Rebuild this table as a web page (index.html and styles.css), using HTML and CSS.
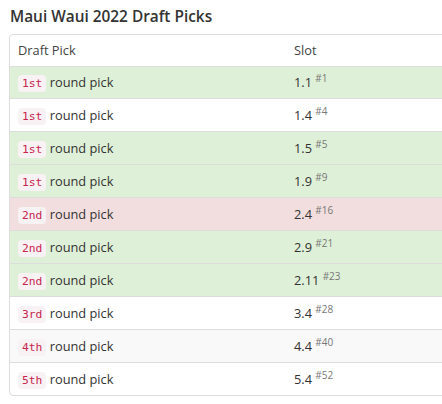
FILE: index.html
```html
<!DOCTYPE html>
<html lang="en">
<head>
<meta charset="utf-8">
<title>Maui Waui 2022 Draft Picks</title>
<link rel="stylesheet" href="styles.css">
</head>
<body>
<h4 class="title">Maui Waui 2022 Draft Picks</h4>
<div class="panel">
  <table class="picks">
    <thead>
      <tr><th class="col-pick">Draft Pick</th><th>Slot</th></tr>
    </thead>
    <tbody>
      <tr class="success"><td><code>1st</code> round pick</td><td>1.1 <sup class="overall">#1</sup></td></tr>
      <tr><td><code>1st</code> round pick</td><td>1.4 <sup class="overall">#4</sup></td></tr>
      <tr class="success"><td><code>1st</code> round pick</td><td>1.5 <sup class="overall">#5</sup></td></tr>
      <tr class="success"><td><code>1st</code> round pick</td><td>1.9 <sup class="overall">#9</sup></td></tr>
      <tr class="danger"><td><code>2nd</code> round pick</td><td>2.4 <sup class="overall">#16</sup></td></tr>
      <tr class="success"><td><code>2nd</code> round pick</td><td>2.9 <sup class="overall">#21</sup></td></tr>
      <tr class="success"><td><code>2nd</code> round pick</td><td>2.11 <sup class="overall">#23</sup></td></tr>
      <tr><td><code>3rd</code> round pick</td><td>3.4 <sup class="overall">#28</sup></td></tr>
      <tr class="striped"><td><code>4th</code> round pick</td><td>4.4 <sup class="overall">#40</sup></td></tr>
      <tr><td><code>5th</code> round pick</td><td>5.4 <sup class="overall">#52</sup></td></tr>
    </tbody>
  </table>
</div>
</body>
</html>
```
FILE: styles.css
```css
html {
  overflow: hidden;
}
body {
  margin: 0;
  padding: 0 0 0 9px;
  font-family: "Open Sans", "Noto Sans", sans-serif;
  font-size: 12.8px;
  color: #333;
  background: #fff;
}
.title {
  margin: 0;
  padding: 6px 0 0 1px;
  height: 28px;
  font-size: 15.4px;
  font-weight: 600;
  line-height: 22px;
  color: #333;
}
.panel {
  width: 580px;
  border: 1px solid #ddd;
  border-radius: 4px;
  overflow: hidden;
}
.picks {
  width: 100%;
  border-collapse: collapse;
}
.picks th,
.picks td {
  box-sizing: border-box;
  text-align: left;
  padding: 0 8px;
  line-height: 20px;
  vertical-align: middle;
}
.picks th {
  height: 31px;
  font-weight: 400;
  color: #444;
  border-bottom: 1px solid #ddd;
}
.picks td {
  height: 33px;
  border-top: 1px solid #ddd;
}
.picks tbody tr:first-child td {
  height: 32px;
  border-top: 0;
}
.col-pick {
  width: 276px;
}
.picks tr.success td {
  background: #dff0d8;
}
.picks tr.danger td {
  background: #f2dede;
}
.picks tr.striped td {
  background: #f9f9f9;
}
code {
  font-family: "DejaVu Sans Mono", "Liberation Mono", monospace;
  font-size: 11.3px;
  line-height: 1;
  color: #c7254e;
  background: #f9f2f4;
  border-radius: 4px;
  padding: 2px 4px;
}
.overall {
  font-size: 10px;
  color: #777;
  vertical-align: 5px;
  line-height: 0;
}
```
